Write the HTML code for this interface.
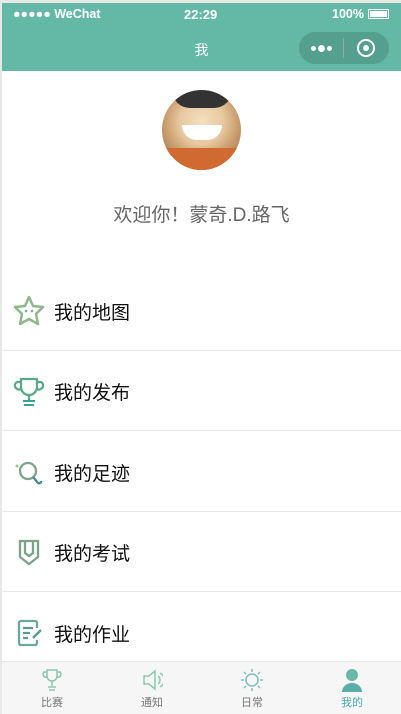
<!DOCTYPE html>
<html><head><meta charset="utf-8"><style>
*{margin:0;padding:0;box-sizing:border-box}
body{width:401px;height:714px;overflow:hidden;background:#e8e8e6;font-family:"Liberation Sans","Noto Sans CJK SC",sans-serif;position:relative}
.page{position:absolute;left:2px;top:3px;width:399px;height:711px;background:#fff}
.hdr{position:absolute;left:0;top:0;width:399px;height:68px;background:#64b9a6;color:#fff}
.st{position:absolute;top:4px;font-size:12.5px;font-weight:bold}
.title{position:absolute;top:37px;left:0;width:399px;text-align:center;font-size:14px}
.cap{position:absolute;left:297px;top:29px;width:90px;height:32px;border-radius:16px;background:#549f8e}
.av{position:absolute;left:160px;top:87px;width:79px;height:80px;border-radius:50%;overflow:hidden;background:radial-gradient(circle at 50% 40%,#f4e0c0 0,#e8c9a0 35%,#c79a6a 60%,#7a5a40 100%)}
.wel{position:absolute;top:197px;left:0;width:399px;text-align:center;font-size:19px;color:#666}
.row{position:absolute;left:0;width:399px;height:80px;border-bottom:1px solid #e8e8e8}
.row span{position:absolute;left:52px;top:27px;font-size:19px;color:#111}
.row svg{position:absolute;left:10px;top:23px}
.tab{position:absolute;left:0;top:658px;width:399px;height:53px;background:#f6f6f6;border-top:1px solid #e6e6e6}
.ti{position:absolute;top:0;width:100px;text-align:center;font-size:11px;color:#777}
.ti svg{display:block;margin:6px auto 0}
.ti div{margin-top:2px}
</style></head><body><div class="page">
<div class="hdr">
<div class="st" style="left:11px">●●●●● WeChat</div>
<div class="st" style="left:182px;font-size:13px">22:29</div>
<div class="st" style="left:330px">100%</div>
<div style="position:absolute;left:366px;top:6px;width:21px;height:10px;border:1px solid #fff;padding:1px"><div style="background:#fff;width:100%;height:100%"></div></div>
<div class="title">我</div>
<div class="cap">
<div style="position:absolute;left:12px;top:14px;width:5px;height:5px;border-radius:50%;background:#fff"></div>
<div style="position:absolute;left:19px;top:13px;width:7px;height:7px;border-radius:50%;background:#fff"></div>
<div style="position:absolute;left:28px;top:14px;width:5px;height:5px;border-radius:50%;background:#fff"></div>
<div style="position:absolute;left:44px;top:6px;width:1px;height:20px;background:#7fb8aa"></div>
<div style="position:absolute;left:58px;top:7px;width:18px;height:18px;border-radius:50%;border:2px solid #fff"></div>
<div style="position:absolute;left:64px;top:13px;width:6px;height:6px;border-radius:50%;background:#fff"></div>
</div>
</div>
<div class="av"><div style="position:absolute;left:0;top:58px;width:79px;height:22px;background:#d06a30"></div><div style="position:absolute;left:20px;top:35px;width:40px;height:15px;background:#fff;border-radius:0 0 20px 20px"></div><div style="position:absolute;left:10px;top:0;width:60px;height:18px;background:#333;border-radius:0 0 30px 30px"></div></div>
<div class="wel">欢迎你！蒙奇.D.路飞</div>
<div class="row" style="top:268px"><svg width="34" height="34" viewBox="0 0 34 34"><path d="M17 3l4 9 10 1-7 7 2 10-9-5-9 5 2-10-7-7 10-1z" fill="none" stroke="#8fb88a" stroke-width="2.5" stroke-linejoin="round"/><circle cx="14" cy="17" r="1.3" fill="#7a9"/><circle cx="20" cy="17" r="1.3" fill="#7a9"/></svg><span>我的地图</span></div>
<div class="row" style="top:348px"><svg width="34" height="34" viewBox="0 0 34 34"><path d="M9 5h16v8a8 8 0 0 1-16 0z M9 8H5a4 4 0 0 0 4 7 M25 8h4a4 4 0 0 1-4 7 M17 21v5" fill="none" stroke="#5aa98a" stroke-width="2.3"/><path d="M11 27h12M12 31h10" stroke="#3aa0a0" stroke-width="2"/></svg><span>我的发布</span></div>
<div class="row" style="top:429px"><svg width="34" height="34" viewBox="0 0 34 34"><circle cx="16" cy="16" r="8" fill="none" stroke="#7aa390" stroke-width="2.3"/><path d="M21 22l5 6a2 2 0 0 0 3-2" fill="none" stroke="#4a8a90" stroke-width="2.3"/><circle cx="5" cy="11" r="1.5" fill="#9c6"/></svg><span>我的足迹</span></div>
<div class="row" style="top:509px"><svg width="34" height="34" viewBox="0 0 34 34"><path d="M8 6h18v16l-9 7-9-7z M13 6v12l4 3 4-3V6" fill="none" stroke="#7aa38a" stroke-width="2.3"/></svg><span>我的考试</span></div>
<div class="row" style="top:590px;border:none"><svg width="34" height="34" viewBox="0 0 34 34"><path d="M25 12V7a2 2 0 0 0-2-2H9a2 2 0 0 0-2 2v20a2 2 0 0 0 2 2h14a2 2 0 0 0 2-2v-3" fill="none" stroke="#6aa89a" stroke-width="2.3"/><path d="M11 12h10M11 17h7M11 22h5M21 22l8-8" stroke="#5a9a90" stroke-width="2.3"/></svg><span>我的作业</span></div>
<div class="tab">
<div class="ti" style="left:0"><svg width="22" height="24" viewBox="0 0 22 24"><path d="M6 2h10v6a5 5 0 0 1-10 0z M6 4H3a3 3 0 0 0 3 5 M16 4h3a3 3 0 0 1-3 5 M11 13v5 M7 19h8M8 22h6" fill="none" stroke="#8cc8b0" stroke-width="1.5"/></svg><div>比赛</div></div>
<div class="ti" style="left:100px"><svg width="22" height="24" viewBox="0 0 22 24"><path d="M3 8h5l6-5v18l-6-5H3z M17 8a5 5 0 0 1 0 8 M19 5a8 8 0 0 1 0 14" fill="none" stroke="#8cc8b0" stroke-width="1.5"/></svg><div>通知</div></div>
<div class="ti" style="left:200px"><svg width="24" height="24" viewBox="0 0 24 24"><circle cx="12" cy="12" r="6" fill="none" stroke="#7cc0b8" stroke-width="1.5"/><path d="M12 1v3M12 20v3M1 12h3M20 12h3M4 4l2 2M18 18l2 2M4 20l2-2M18 6l2-2" stroke="#7cc0b8" stroke-width="1.5"/></svg><div>日常</div></div>
<div class="ti" style="left:300px;color:#4aa8a8"><svg width="22" height="24" viewBox="0 0 22 24"><circle cx="11" cy="7" r="6" fill="#6ab8a8"/><path d="M1 24a10 9 0 0 1 20 0z" fill="#5aaea8"/></svg><div>我的</div></div>
</div>
</div></body></html>
